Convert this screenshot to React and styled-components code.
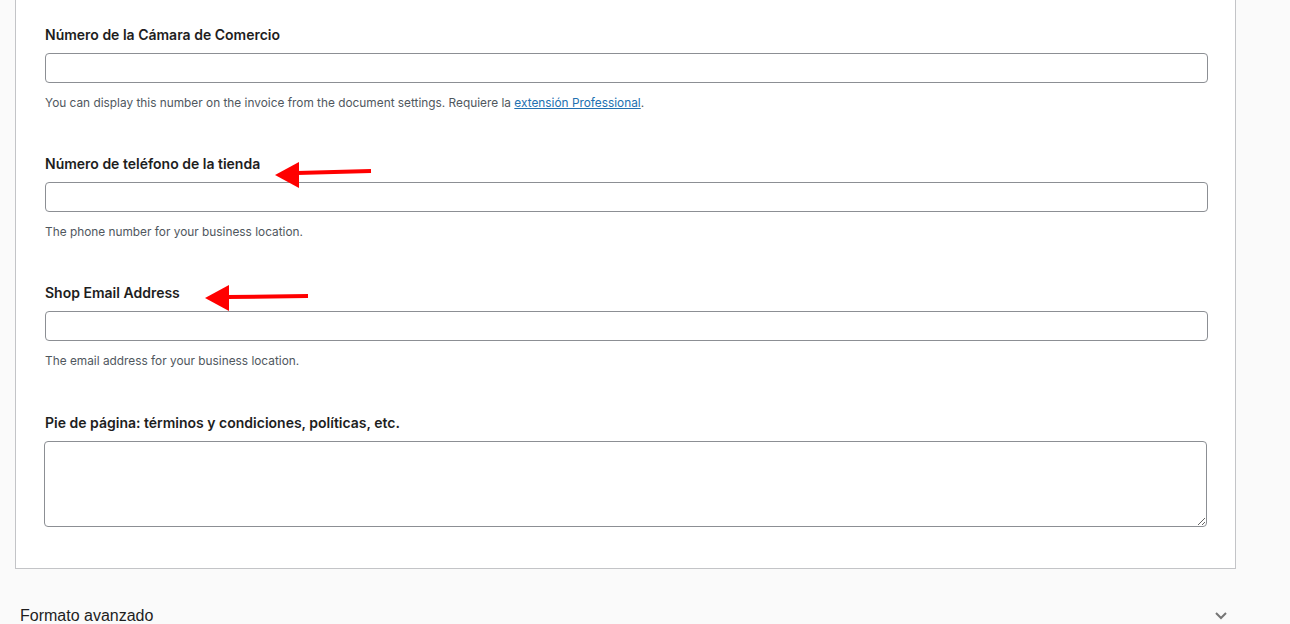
import React from "react";
import styled, { createGlobalStyle } from "styled-components";

const GlobalStyle = createGlobalStyle`
  html, body {
    margin: 0;
    padding: 0;
    background: #fafafa;
    font-family: -apple-system, BlinkMacSystemFont, Inter, "Noto Sans", sans-serif;
    color: #1e1e1e;
  }
`;

const Page = styled.div`
  width: 1290px;
  height: 624px;
  overflow: hidden;
  padding-left: 15px;
  box-sizing: border-box;
`;

const Panel = styled.div`
  position: relative;
  width: 1221px;
  box-sizing: border-box;
  background: #fff;
  border: 1px solid #c3c4c7;
  border-top: none;
  padding: 25px 27px 41px 29px;
`;

const Field = styled.div`
  display: flex;
  flex-direction: column;
  margin-bottom: ${(p) => p.$gap ?? 42}px;
`;

const Label = styled.label`
  font-size: 14px;
  line-height: 20px;
  font-weight: 600;
  color: #1e1e1e;
  margin-bottom: 8px;
`;

const Input = styled.input`
  box-sizing: border-box;
  width: 100%;
  height: 30px;
  border: 1px solid #8c8f94;
  border-radius: 4px;
  background: #fff;
  margin: 0;
`;

const TextArea = styled.textarea`
  box-sizing: border-box;
  width: 100%;
  height: 86px;
  border: 1px solid #8c8f94;
  border-radius: 4px;
  background: #fff;
  margin: 0 0 0 -1px;
  display: block;
`;

const Help = styled.p`
  margin: 11px 0 0;
  font-size: 11.85px;
  line-height: 18px;
  color: #50575e;
`;

const HelpLink = styled.a`
  color: #2271b1;
  text-decoration: underline;
`;

const Arrow = styled.svg`
  position: absolute;
  left: ${(p) => p.$x}px;
  top: ${(p) => p.$y}px;
  overflow: visible;
`;

const Section = styled.div`
  display: flex;
  align-items: center;
  justify-content: space-between;
  width: 1221px;
  box-sizing: border-box;
  padding: 37px 8px 0 5px;
`;

const SectionTitle = styled.span`
  font-family: "Liberation Sans", Arial, sans-serif;
  font-size: 16px;
  line-height: 19px;
  color: #1e1e1e;
`;

function RedArrow({ x, y, length, tilt }) {
  return (
    <Arrow $x={x} $y={y} width={length} height={26}>
      <line x1={22} y1={13 - tilt / 2} x2={length} y2={13 - tilt} stroke="#ff0000" strokeWidth={4} />
      <polygon points={`0,13 24,0 24,26`} fill="#ff0000" />
    </Arrow>
  );
}

export default function App() {
  return (
    <Page>
      <GlobalStyle />
      <Panel>
        <Field>
          <Label>Número de la Cámara de Comercio</Label>
          <Input />
          <Help>
            You can display this number on the invoice from the document settings. Requiere la{" "}
            <HelpLink href="#">extensión Professional</HelpLink>.
          </Help>
        </Field>
        <Field>
          <Label>Número de teléfono de la tienda</Label>
          <Input />
          <Help>The phone number for your business location.</Help>
        </Field>
        <Field $gap={43}>
          <Label>Shop Email Address</Label>
          <Input />
          <Help>The email address for your business location.</Help>
        </Field>
        <Field $gap={0}>
          <Label>Pie de página: términos y condiciones, políticas, etc.</Label>
          <TextArea />
        </Field>
        <RedArrow x={259} y={162} length={96} tilt={4} />
        <RedArrow x={189} y={285} length={103} tilt={2} />
      </Panel>
      <Section>
        <SectionTitle>Formato avanzado</SectionTitle>
        <svg width="14" height="9" viewBox="0 0 14 9">
          <path d="M2 2l5 5 5-5" fill="none" stroke="#757575" strokeWidth="2" />
        </svg>
      </Section>
    </Page>
  );
}
